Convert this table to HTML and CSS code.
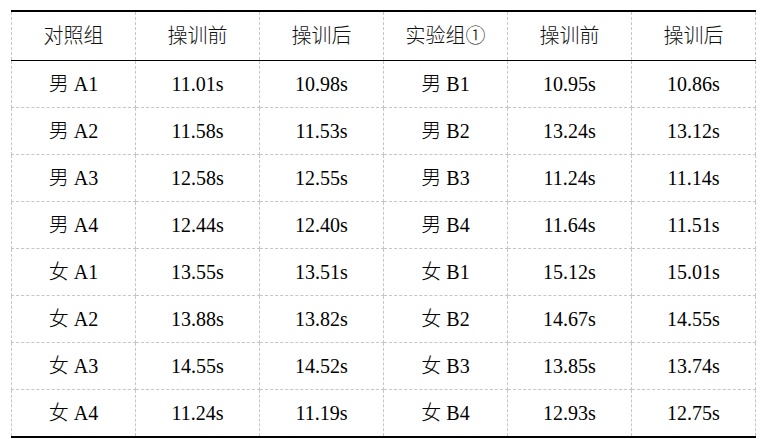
FILE: index.html
```html
<!DOCTYPE html>
<html lang="zh-CN">
<head>
<meta charset="utf-8">
<title>对照组与实验组</title>
<link rel="stylesheet" href="styles.css">
</head>
<body>
<table class="data">
  <colgroup>
    <col class="c"><col class="c"><col class="c"><col class="c"><col class="c"><col class="c">
  </colgroup>
  <thead>
    <tr><th>对照组</th><th>操训前</th><th>操训后</th><th>实验组①</th><th>操训前</th><th>操训后</th></tr>
  </thead>
  <tbody>
    <tr><td>男 A1</td><td>11.01s</td><td>10.98s</td><td>男 B1</td><td>10.95s</td><td>10.86s</td></tr>
    <tr><td>男 A2</td><td>11.58s</td><td>11.53s</td><td>男 B2</td><td>13.24s</td><td>13.12s</td></tr>
    <tr><td>男 A3</td><td>12.58s</td><td>12.55s</td><td>男 B3</td><td>11.24s</td><td>11.14s</td></tr>
    <tr><td>男 A4</td><td>12.44s</td><td>12.40s</td><td>男 B4</td><td>11.64s</td><td>11.51s</td></tr>
    <tr><td>女 A1</td><td>13.55s</td><td>13.51s</td><td>女 B1</td><td>15.12s</td><td>15.01s</td></tr>
    <tr><td>女 A2</td><td>13.88s</td><td>13.82s</td><td>女 B2</td><td>14.67s</td><td>14.55s</td></tr>
    <tr><td>女 A3</td><td>14.55s</td><td>14.52s</td><td>女 B3</td><td>13.85s</td><td>13.74s</td></tr>
    <tr><td>女 A4</td><td>11.24s</td><td>11.19s</td><td>女 B4</td><td>12.93s</td><td>12.75s</td></tr>
  </tbody>
</table>
</body>
</html>
```

FILE: styles.css
```css
html, body {
  margin: 0;
  padding: 0;
  background: #ffffff;
}
body {
  padding: 10px 0 0 11px;
  font-family: "Liberation Serif", "Noto Sans CJK SC", serif;
  font-size: 20px;
  color: #000;
}
.data {
  border-collapse: collapse;
  table-layout: fixed;
  width: 745px;
}
.data .c {
  width: 124px;
}
.data th,
.data td {
  padding: 0;
  text-align: center;
  vertical-align: middle;
  font-weight: 300;
  font-family: "Liberation Serif", "Noto Sans CJK SC", serif;
  border-left: 1px dashed #c6c6c6;
  border-right: 1px dashed #c6c6c6;
  border-bottom: 1px dashed #c6c6c6;
  line-height: 23px;
}
.data th {
  height: 48px;
  border-top: 2px solid #000;
  border-bottom: 1px solid #000;
  color: #111;
}
.data td {
  height: 46px;
}
.data tbody tr:last-child td {
  border-bottom: 2px solid #000;
}
```
